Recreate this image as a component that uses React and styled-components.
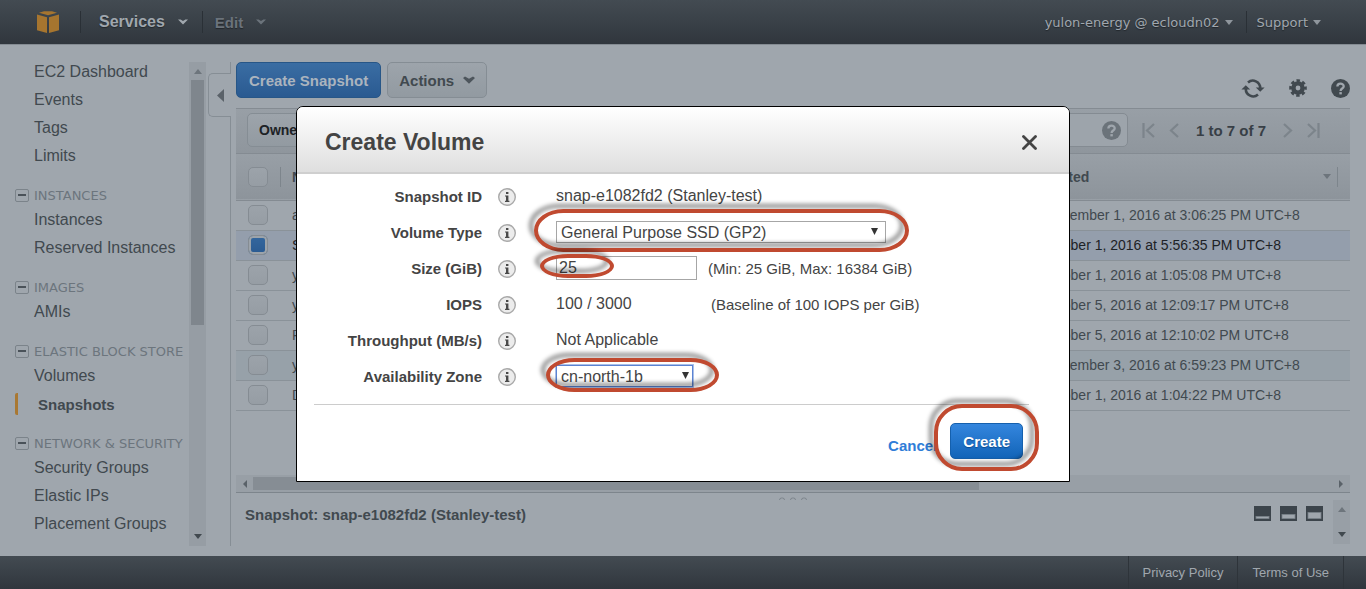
import React, { useState } from "react";
import styled, { createGlobalStyle } from "styled-components";

const GlobalStyle = createGlobalStyle`
  * {
    box-sizing: border-box;
  }
  body {
    margin: 0;
    background: #9fa6ad;
    color: #41494f;
    font-family: "Liberation Sans", Arial, sans-serif;
    font-size: 16px;
  }
  button, input, select {
    font-family: inherit;
  }
  a {
    color: inherit;
    text-decoration: none;
  }
`;

const Page = styled.div`
  min-height: 100vh;
  display: flex;
  flex-direction: column;
`;
const TopBar = styled.header`
  height: 45px;
  display: flex;
  align-items: center;
  padding: 0 45px 0 36px;
  background: linear-gradient(to bottom, #434b52, #30363d);
  border-bottom: 1px solid #848b92;
`;
const LogoLink = styled.a`
  display: flex;
  margin-right: 20px;
`;
const MenuButton = styled.button`
  display: flex;
  align-items: center;
  gap: 13px;
  height: 22px;
  padding: 0 14px 0 ${(props) => (props.$dim ? "12px" : "18px")};
  border: 0;
  border-left: 1px solid #2a3036;
  background: none;
  color: ${(props) => (props.$dim ? "#6b737b" : "#a0a7ae")};
  font-size: ${(props) => (props.$dim ? "15px" : "16px")};
  font-weight: bold;
  white-space: nowrap;
  text-shadow: 0 1px 1px #22272c;
`;
const AccountButton = styled(MenuButton)`
  gap: 5px;
  padding: 0 13px 0 10px;
  font-family: "DejaVu Sans", Verdana, sans-serif;
  font-size: 13px;
  font-weight: normal;
  &:last-child {
    padding-right: 0;
  }
  &:not(:last-child) {
    border-left: 0;
  }
`;
const Spacer = styled.div`
  flex: 1;
`;
const Main = styled.div`
  flex: 1;
  display: flex;
  padding-right: 16px;
`;
const Sidebar = styled.nav`
  width: 189px;
  padding: 13px 0 10px 15px;
  white-space: nowrap;
  overflow: hidden;
`;
const NavLink = styled.a`
  display: block;
  height: 28px;
  line-height: 28px;
  padding-left: 19px;
  font-size: 16px;
`;
const ActiveLink = styled.a`
  display: flex;
  align-items: center;
  height: 28px;
  font-size: 15px;
  font-weight: bold;
  &::before {
    content: "";
    width: 3px;
    height: 22px;
    margin-right: 20px;
    border-radius: 2px 0 0 2px;
    background: #a97832;
  }
`;
const NavHeading = styled.button`
  display: flex;
  align-items: center;
  gap: 5px;
  height: 22px;
  margin-top: 14px;
  padding: 0;
  border: 0;
  background: none;
  color: #6c757d;
  font-family: "DejaVu Sans", Verdana, sans-serif;
  font-size: 13px;
  white-space: nowrap;
`;
const Toggle = styled.span`
  display: flex;
  align-items: center;
  justify-content: center;
  width: 14px;
  height: 13px;
  border: 1px solid #7b838a;
  border-radius: 2px;
  &::before {
    content: "";
    width: 8px;
    height: 2px;
    background: #4a5259;
  }
`;
const ScrollTrack = styled.div`
  display: flex;
  flex-direction: column;
  align-items: center;
  width: 17px;
  margin: 17px 0 10px;
  padding: 7px 0;
  background: #969da4;
`;
const ScrollThumb = styled.div`
  width: 13px;
  height: 245px;
  margin-top: 6px;
  background: #7f868d;
`;
const Gutter = styled.div`
  width: 25px;
  margin: 17px 5px 10px 0;
  border-right: 1px solid #868e95;
`;
const CollapseButton = styled.button`
  display: flex;
  align-items: center;
  justify-content: center;
  width: 23px;
  height: 44px;
  margin: 11px 0 0 2px;
  padding: 0;
  border: 1px solid #868e95;
  border-right: 0;
  border-radius: 5px 0 0 5px;
  background: #9fa6ad;
`;
const Content = styled.main`
  flex: 1;
  min-width: 0;
  display: flex;
  flex-direction: column;
  padding: 17px 0 11px;
`;
const ActionBar = styled.div`
  display: flex;
  align-items: flex-start;
  gap: 6px;
  margin-bottom: 10px;
`;
const PrimaryButton = styled.button`
  height: 36px;
  padding: 0 12px;
  border: 1px solid #275687;
  border-radius: 5px;
  background: linear-gradient(to bottom, #3a6da3, #2a5a91);
  color: #abb4be;
  font-size: 15px;
  font-weight: bold;
`;
const GreyButton = styled.button`
  display: flex;
  align-items: center;
  gap: 9px;
  height: 36px;
  padding: 0 11px;
  border: 1px solid #858d94;
  border-radius: 5px;
  background: linear-gradient(to bottom, #9da4ab, #929aa1);
  color: #41494f;
  font-size: 15px;
  font-weight: bold;
`;
const IconGroup = styled.div`
  display: flex;
  align-items: center;
  gap: 24px;
  padding-top: 16px;
`;
const IconButton = styled.button`
  display: flex;
  padding: 0;
  border: 0;
  background: none;
  color: inherit;
`;
const FilterBar = styled.div`
  display: flex;
  align-items: center;
  height: 46px;
  padding: 0 30px 2px 11px;
  border-top: 1px solid #848b92;
  border-bottom: 1px solid #848b92;
  background: linear-gradient(to bottom, #989fa6, #8f969d);
`;
const OwnerButton = styled(GreyButton)`
  height: 34px;
  color: #1d2226;
  font-size: 14px;
`;
const SearchBox = styled.label`
  flex: 1;
  display: flex;
  align-items: center;
  height: 34px;
  margin: 0 14px 0 12px;
  padding: 0 6px;
  border: 1px solid #848b92;
  border-radius: 5px;
  background: #9da4ab;
  color: #6b737a;
`;
const SearchInput = styled.input`
  flex: 1;
  min-width: 0;
  border: 0;
  outline: 0;
  background: none;
`;
const Pager = styled.div`
  display: flex;
  align-items: center;
  gap: 12px;
  color: #7c848b;
  font-size: 15px;
`;
const PageCount = styled.strong`
  margin: 0 4px;
  color: #383f46;
`;
const Grid = styled.table`
  width: 100%;
  table-layout: fixed;
  border-collapse: collapse;
  text-align: left;
  white-space: nowrap;
`;
const HeadRow = styled.tr`
  height: 46px;
  background: linear-gradient(to bottom, #989fa6, #8d949b);
  border-bottom: 1px solid #848b92;
`;
const HeadCell = styled.th`
  width: ${(props) => props.$width || "auto"};
  padding: 0 0 0 ${(props) => (props.$check ? "12px" : "11px")};
  font-size: 14px;
`;
const HeadInner = styled.div`
  display: flex;
  align-items: center;
  justify-content: space-between;
  height: 20px;
  margin-right: 12px;
  padding-right: 6px;
  border-right: 1px solid #7d858c;
`;
const HeadCheck = styled(HeadInner)`
  margin-right: 0;
  padding: 0;
`;
const Row = styled.tr`
  height: 30px;
  border-bottom: 1px solid #8a9299;
  background: ${(props) =>
    props.$selected ? "#949eac" : props.$hovered ? "#97a1a9" : "none"};
  color: ${(props) => (props.$selected ? "#1d2226" : "#41494f")};
`;
const Cell = styled.td`
  padding: 0 0 0 ${(props) => (props.$check ? "12px" : "11px")};
  font-size: 14px;
`;
const CheckBox = styled.input`
  appearance: none;
  display: block;
  width: 20px;
  height: 20px;
  margin: 0;
  border: 1px solid #858c93;
  border-radius: 5px;
  background: linear-gradient(to bottom, #9ca3aa, #969da4);
  &:checked {
    background: linear-gradient(to bottom, #34679e, #2a5a91);
    box-shadow: inset 0 0 0 2px #9ca3aa;
  }
`;
const TableScroll = styled.div`
  flex: 1;
  display: flex;
  flex-direction: column;
  justify-content: flex-end;
  min-height: 60px;
  border-bottom: 1px solid #7d858c;
`;
const HorizontalTrack = styled.div`
  display: flex;
  align-items: center;
  height: 17px;
  padding: 0 7px;
  background: #989fa6;
`;
const HorizontalThumb = styled.div`
  width: 66%;
  height: 13px;
  margin: 0 auto 0 6px;
  background: #868d94;
`;
const Details = styled.section`
  display: flex;
  gap: 10px;
  height: 52px;
  padding: 7px 0 0 9px;
`;
const DetailTitle = styled.h2`
  flex: 1;
  margin: 5px 0 0;
  font-size: 15px;
  line-height: 20px;
`;
const Splitter = styled.div`
  height: 0;
  display: flex;
  justify-content: center;
`;
const PaneIcons = styled.div`
  display: flex;
  gap: 9px;
  padding-top: 6px;
`;
const SmallTrack = styled.div`
  display: flex;
  flex-direction: column;
  align-items: center;
  justify-content: space-between;
  width: 17px;
  height: 44px;
  padding: 7px 0;
  background: #989fa6;
`;
const Footer = styled.footer`
  display: flex;
  justify-content: flex-end;
  height: 33px;
  padding-right: 22px;
  background: linear-gradient(to bottom, #434b52, #30363d);
`;
const FooterLink = styled.a`
  display: flex;
  align-items: center;
  padding: 0 14px;
  border-left: 1px solid #2e343a;
  color: #a0a7ae;
  font-size: 13px;
  &:last-child {
    border-right: 1px solid #2e343a;
  }
`;

const Overlay = styled.div`
  position: fixed;
  inset: 0;
  display: flex;
  align-items: flex-start;
  justify-content: center;
  padding-top: 106px;
`;
const Dialog = styled.form`
  width: 774px;
  max-width: 100%;
  border: 1px solid #000;
  border-radius: 7px 7px 0 0;
  background: #fff;
  color: #444;
`;
const DialogHeader = styled.div`
  display: flex;
  align-items: center;
  justify-content: space-between;
  height: 67px;
  padding: 6px 32px 0 28px;
  border-bottom: 2px solid #cfcfcf;
  border-radius: 6px 6px 0 0;
  background: linear-gradient(to bottom, #fff, #dfdfdf);
`;
const DialogTitle = styled.h1`
  margin: 0;
  font-size: 23px;
`;
const FieldList = styled.div`
  padding: 4px 17px 10px;
`;
const Field = styled.div`
  display: grid;
  grid-template-columns: 168px 34px auto 1fr;
  align-items: center;
  height: 36px;
`;
const FieldLabel = styled.label`
  text-align: right;
  font-size: 15px;
  font-weight: bold;
`;
const InfoButton = styled(IconButton)`
  justify-content: flex-end;
  padding-top: 2px;
`;
const FieldValue = styled.div`
  position: relative;
  min-width: 141px;
  margin-left: 40px;
`;
const FieldHint = styled.span`
  padding-left: ${(props) => (props.$wide ? "14px" : "11px")};
  font-size: 15px;
`;
const SelectBox = styled.select`
  appearance: none;
  display: block;
  width: ${(props) => props.$width};
  height: 22px;
  padding: 0 24px 0 4px;
  border: 1px solid ${(props) => (props.$focused ? "#5b83d3" : "#a6a6a6")};
  border-radius: 0;
  outline: 0;
  box-shadow: ${(props) => (props.$focused ? "0 0 0 1px #a9bfe8" : "none")};
  background: #fff;
  color: #444;
  font-size: 16px;
`;
const SelectArrow = styled.svg`
  position: absolute;
  right: 8px;
  top: 7px;
  pointer-events: none;
`;
const NumberInput = styled.input`
  display: block;
  width: 141px;
  height: 24px;
  padding: 0 2px;
  border: 1px solid #a6a6a6;
  outline: 0;
  color: #444;
  font-size: 16px;
`;
const DialogFooter = styled.div`
  display: flex;
  align-items: flex-start;
  justify-content: flex-end;
  gap: 13px;
  height: 77px;
  margin: 0 40px 0 17px;
  padding: 18px 6px 0 0;
  border-top: 1px solid #ccc;
`;
const CancelButton = styled.button`
  margin-top: 4px;
  height: 36px;
  padding: 0;
  border: 0;
  background: none;
  color: #2f7dd8;
  font-size: 15px;
  font-weight: bold;
`;
const CreateButton = styled(PrimaryButton)`
  border-color: #1560ad;
  background: linear-gradient(to bottom, #3486de, #1264b8);
  color: #fff;
  text-shadow: 0 1px 1px #0c4c90;
`;
const Anchor = styled.div`
  position: relative;
`;
const Marker = styled.span`
  position: absolute;
  left: ${(props) => props.$left}px;
  top: ${(props) => props.$top}px;
  width: ${(props) => props.$width}px;
  height: ${(props) => props.$height}px;
  border: 4px solid #c04a30;
  border-radius: ${(props) => props.$radius};
  filter: drop-shadow(-5px -5px 2px rgba(0, 0, 0, 0.45));
  pointer-events: none;
  z-index: 1;
`;

const Caret = ({ up, color = "#41494f" }) => (
  <svg width="8" height="5" viewBox="0 0 8 5">
    <path d={up ? "M0 5h8L4 0z" : "M0 0h8L4 5z"} fill={color} />
  </svg>
);
const SideCaret = ({ right, big, color = "#5a6269" }) => (
  <svg width={big ? 7 : 4} height={big ? 13 : 8} viewBox="0 0 4 8" preserveAspectRatio="none">
    <path d={right ? "M0 0v8l4-4z" : "M4 0v8L0 4z"} fill={color} />
  </svg>
);
const Chevron = ({ color }) => (
  <svg width="10" height="6" viewBox="0 0 10 6">
    <path d="M0 0.6h2.6L5 2L7.4 0.6H10L5 5.6z" fill={color} />
  </svg>
);
const WideChevron = () => (
  <svg width="12" height="8" viewBox="0 0 12 8">
    <path d="M0 2L2 0.4L6 2.8L10 0.4L12 2L6 7.8z" fill="#4d555c" />
  </svg>
);
const CubeLogo = () => (
  <svg width="24" height="22" viewBox="0 0 24 22" fill="#a6752f">
    <path d="M3 1.8L8 0.3h8l5 1.5L12 4.2z" />
    <path d="M1 3.4l10 2.8V22L1 19.2z" />
    <path d="M23 3.4L13 6.2V22l10-2.8z" />
  </svg>
);
const RefreshIcon = () => (
  <svg width="24" height="20" viewBox="0 0 24 20" fill="none" stroke="#41494f" strokeWidth="2.6">
    <path d="M7 4.4A7.4 7.4 0 0 1 19.2 10" />
    <path d="M17 16.6A7.4 7.4 0 0 1 4.8 11" />
    <path d="M14.8 9.4h8.8l-4.4 4.4z" fill="#41494f" stroke="none" />
    <path d="M9.2 11.6H0.4l4.4-4.4z" fill="#41494f" stroke="none" />
  </svg>
);
const GearIcon = () => (
  <svg width="18" height="18" viewBox="0 0 18 18">
    <g fill="none" stroke="#41494f">
      <circle cx="9" cy="9" r="4.6" strokeWidth="4.4" />
      <circle cx="9" cy="9" r="7.4" strokeWidth="2.8" strokeDasharray="3.4 2.41" strokeDashoffset="1.7" />
    </g>
  </svg>
);
const HelpIcon = ({ color = "#41494f", mark = "#9fa6ad" }) => (
  <svg width="19" height="19" viewBox="0 0 20 20">
    <circle cx="10" cy="10" r="10" fill={color} />
    <path
      d="M6.7 7.8C6.7 3.9 13.4 3.9 13.4 7.7c0 2.4-3.3 2.3-3.3 4.8"
      fill="none"
      stroke={mark}
      strokeWidth="2.4"
    />
    <rect x="8.8" y="13.8" width="2.6" height="2.4" fill={mark} />
  </svg>
);
const InfoIcon = () => (
  <svg width="18" height="18" viewBox="0 0 18 18">
    <circle cx="9" cy="9" r="8.3" fill="#ececec" stroke="#a9a9a9" strokeWidth="1.4" />
    <path d="M8 4h2.4v2H8zM7 7.4h3.4v5.4h1V14H7v-1.2h1V8.6H7z" fill="#4a4a4a" />
  </svg>
);
const CloseIcon = () => (
  <svg width="15" height="15" viewBox="0 0 15 15" stroke="#444" strokeWidth="2.8" strokeLinecap="round">
    <path d="M1.5 1.5l12 12M13.5 1.5l-12 12" />
  </svg>
);
const PageArrow = ({ d }) => (
  <svg width="13" height="15" viewBox="0 0 13 15" fill="none" stroke="currentColor" strokeWidth="2.2">
    <path d={d} />
  </svg>
);
const PaneIcon = ({ level }) => (
  <svg width="17" height="15" viewBox="0 0 17 15">
    <rect width="17" height="15" fill="#3c444b" />
    <rect x="2" y={12.5 - level} width="13" height={level} fill="#9fa6ad" stroke="#7b838a" strokeWidth="0.8" />
  </svg>
);
const GripIcon = () => (
  <svg width="28" height="8" viewBox="0 0 28 8" fill="none" stroke="#7d858c">
    <path d="M0.5 7q0-2 2-2h1q2 0 2 2M11.5 7q0-2 2-2h1q2 0 2 2M22.5 7q0-2 2-2h1q2 0 2 2" />
  </svg>
);

const navGroups = [
  { title: "INSTANCES", links: ["Instances", "Reserved Instances"] },
  { title: "IMAGES", links: ["AMIs"] },
  { title: "ELASTIC BLOCK STORE", links: ["Volumes", "Snapshots"] },
  {
    title: "NETWORK & SECURITY",
    links: ["Security Groups", "Elastic IPs", "Placement Groups"],
  },
];

const snapshots = [
  { name: "app", started: "September 1, 2016 at 3:06:25 PM UTC+8" },
  { name: "Stanley-test", started: "October 1, 2016 at 5:56:35 PM UTC+8" },
  { name: "yulon", started: "October 1, 2016 at 1:05:08 PM UTC+8" },
  { name: "yulon", started: "October 5, 2016 at 12:09:17 PM UTC+8" },
  { name: "Prod", started: "October 5, 2016 at 12:10:02 PM UTC+8" },
  { name: "yulon", started: "September 3, 2016 at 6:59:23 PM UTC+8", hovered: true },
  { name: "Dev", started: "October 1, 2016 at 1:04:22 PM UTC+8" },
];

const NavItem = ({ name }) =>
  name === "Snapshots" ? (
    <ActiveLink href="#">{name}</ActiveLink>
  ) : (
    <NavLink href="#">{name}</NavLink>
  );

const FormRow = ({ label, id, hint, wideHint, children }) => (
  <Field>
    <FieldLabel htmlFor={id} as={id ? "label" : "span"}>
      {label}
    </FieldLabel>
    <InfoButton type="button" aria-label={"About " + label}>
      <InfoIcon />
    </InfoButton>
    <FieldValue>{children}</FieldValue>
    {hint && <FieldHint $wide={wideHint}>{hint}</FieldHint>}
  </Field>
);

const ArrowDown = () => (
  <SelectArrow width="7" height="7" viewBox="0 0 7 7">
    <path d="M0 0h7L3.5 7z" fill="#333" />
  </SelectArrow>
);

const CreateVolume = () => {
  const [size, setSize] = useState("25");
  return (
    <Overlay>
      <Dialog role="dialog" aria-labelledby="dialog-title" onSubmit={(e) => e.preventDefault()}>
        <DialogHeader>
          <DialogTitle id="dialog-title">Create Volume</DialogTitle>
          <IconButton type="button" aria-label="Close">
            <CloseIcon />
          </IconButton>
        </DialogHeader>
        <FieldList>
          <FormRow label="Snapshot ID">snap-e1082fd2 (Stanley-test)</FormRow>
          <FormRow label="Volume Type" id="volume-type">
            <SelectBox id="volume-type" $width="330px">
              <option>General Purpose SSD (GP2)</option>
            </SelectBox>
            <ArrowDown />
            <Marker $left={-22} $top={-12} $width={375} $height={43} $radius="30px / 22px" />
          </FormRow>
          <FormRow label="Size (GiB)" id="size" hint="(Min: 25 GiB, Max: 16384 GiB)">
            <NumberInput id="size" value={size} onChange={(e) => setSize(e.target.value)} />
            <Marker $left={-16} $top={-2} $width={74} $height={24} $radius="28px / 12px" />
          </FormRow>
          <FormRow label="IOPS" hint="(Baseline of 100 IOPS per GiB)" wideHint>
            100 / 3000
          </FormRow>
          <FormRow label="Throughput (MB/s)">Not Applicable</FormRow>
          <FormRow label="Availability Zone" id="zone">
            <SelectBox id="zone" $width="137px" $focused>
              <option>cn-north-1b</option>
            </SelectBox>
            <ArrowDown />
            <Marker $left={-10} $top={-7} $width={173} $height={34} $radius="30px / 18px" />
          </FormRow>
        </FieldList>
        <DialogFooter>
          <CancelButton type="button">Cancel</CancelButton>
          <Anchor>
            <CreateButton type="submit">Create</CreateButton>
            <Marker $left={-16} $top={-19} $width={105} $height={67} $radius="28px" />
          </Anchor>
        </DialogFooter>
      </Dialog>
    </Overlay>
  );
};

const SnapshotTable = () => (
  <Grid>
    <thead>
      <HeadRow>
        <HeadCell $width="45px" $check>
          <HeadCheck>
            <CheckBox type="checkbox" aria-label="Select all" />
          </HeadCheck>
        </HeadCell>
        <HeadCell>Name</HeadCell>
        <HeadCell $width="320px">
          <HeadInner>
            Started
            <Caret color="#6d757c" />
          </HeadInner>
        </HeadCell>
      </HeadRow>
    </thead>
    <tbody>
      {snapshots.map((item, index) => (
        <Row key={index} $selected={index === 1} $hovered={item.hovered}>
          <Cell $check>
            <CheckBox type="checkbox" aria-label={item.name} defaultChecked={index === 1} />
          </Cell>
          <Cell>{item.name}</Cell>
          <Cell>{item.started}</Cell>
        </Row>
      ))}
    </tbody>
  </Grid>
);

export default function App() {
  return (
    <Page>
      <GlobalStyle />
      <TopBar>
        <LogoLink href="#" aria-label="Home">
          <CubeLogo />
        </LogoLink>
        <MenuButton>
          Services
          <Chevron color="#a0a7ae" />
        </MenuButton>
        <MenuButton $dim>
          Edit
          <Chevron color="#6b737b" />
        </MenuButton>
        <Spacer />
        <AccountButton>
          yulon-energy @ ecloudn02
          <Caret color="#8f969d" />
        </AccountButton>
        <AccountButton>
          Support
          <Caret color="#8f969d" />
        </AccountButton>
      </TopBar>
      <Main>
        <Sidebar>
          {["EC2 Dashboard", "Events", "Tags", "Limits"].map((name) => (
            <NavItem key={name} name={name} />
          ))}
          {navGroups.map((group) => (
            <div key={group.title}>
              <NavHeading>
                <Toggle />
                {group.title}
              </NavHeading>
              {group.links.map((name) => (
                <NavItem key={name} name={name} />
              ))}
            </div>
          ))}
        </Sidebar>
        <ScrollTrack>
          <Caret up color="#6d757c" />
          <ScrollThumb />
          <Spacer />
          <Caret />
        </ScrollTrack>
        <Gutter>
          <CollapseButton aria-label="Collapse menu">
            <SideCaret big />
          </CollapseButton>
        </Gutter>
        <Content>
          <ActionBar>
            <PrimaryButton>Create Snapshot</PrimaryButton>
            <GreyButton>
              Actions
              <WideChevron />
            </GreyButton>
            <Spacer />
            <IconGroup>
              <IconButton aria-label="Refresh">
                <RefreshIcon />
              </IconButton>
              <IconButton aria-label="Settings">
                <GearIcon />
              </IconButton>
              <IconButton aria-label="Help">
                <HelpIcon />
              </IconButton>
            </IconGroup>
          </ActionBar>
          <FilterBar>
            <OwnerButton>Owned By Me</OwnerButton>
            <SearchBox>
              <SearchInput aria-label="Search" />
              <HelpIcon color="#6b737a" />
            </SearchBox>
            <Pager>
              <IconButton aria-label="First page">
                <PageArrow d="M1.5 0v15M12 1L5 7.5l7 6.5" />
              </IconButton>
              <IconButton aria-label="Previous page">
                <PageArrow d="M11 1L4 7.5l7 6.5" />
              </IconButton>
              <PageCount>1 to 7 of 7</PageCount>
              <IconButton aria-label="Next page">
                <PageArrow d="M2 1l7 6.5L2 14" />
              </IconButton>
              <IconButton aria-label="Last page">
                <PageArrow d="M1 1l7 6.5L1 14M11.5 0v15" />
              </IconButton>
            </Pager>
          </FilterBar>
          <SnapshotTable />
          <TableScroll>
            <HorizontalTrack>
              <SideCaret />
              <HorizontalThumb />
              <SideCaret right />
            </HorizontalTrack>
          </TableScroll>
          <Splitter>
            <GripIcon />
          </Splitter>
          <Details>
            <DetailTitle>Snapshot: snap-e1082fd2 (Stanley-test)</DetailTitle>
            <PaneIcons>
              <PaneIcon level={2} />
              <PaneIcon level={4} />
              <PaneIcon level={6} />
            </PaneIcons>
            <SmallTrack>
              <Caret up color="#6d757c" />
              <Caret />
            </SmallTrack>
          </Details>
        </Content>
      </Main>
      <Footer>
        <FooterLink href="#">Privacy Policy</FooterLink>
        <FooterLink href="#">Terms of Use</FooterLink>
      </Footer>
      <CreateVolume />
    </Page>
  );
}
